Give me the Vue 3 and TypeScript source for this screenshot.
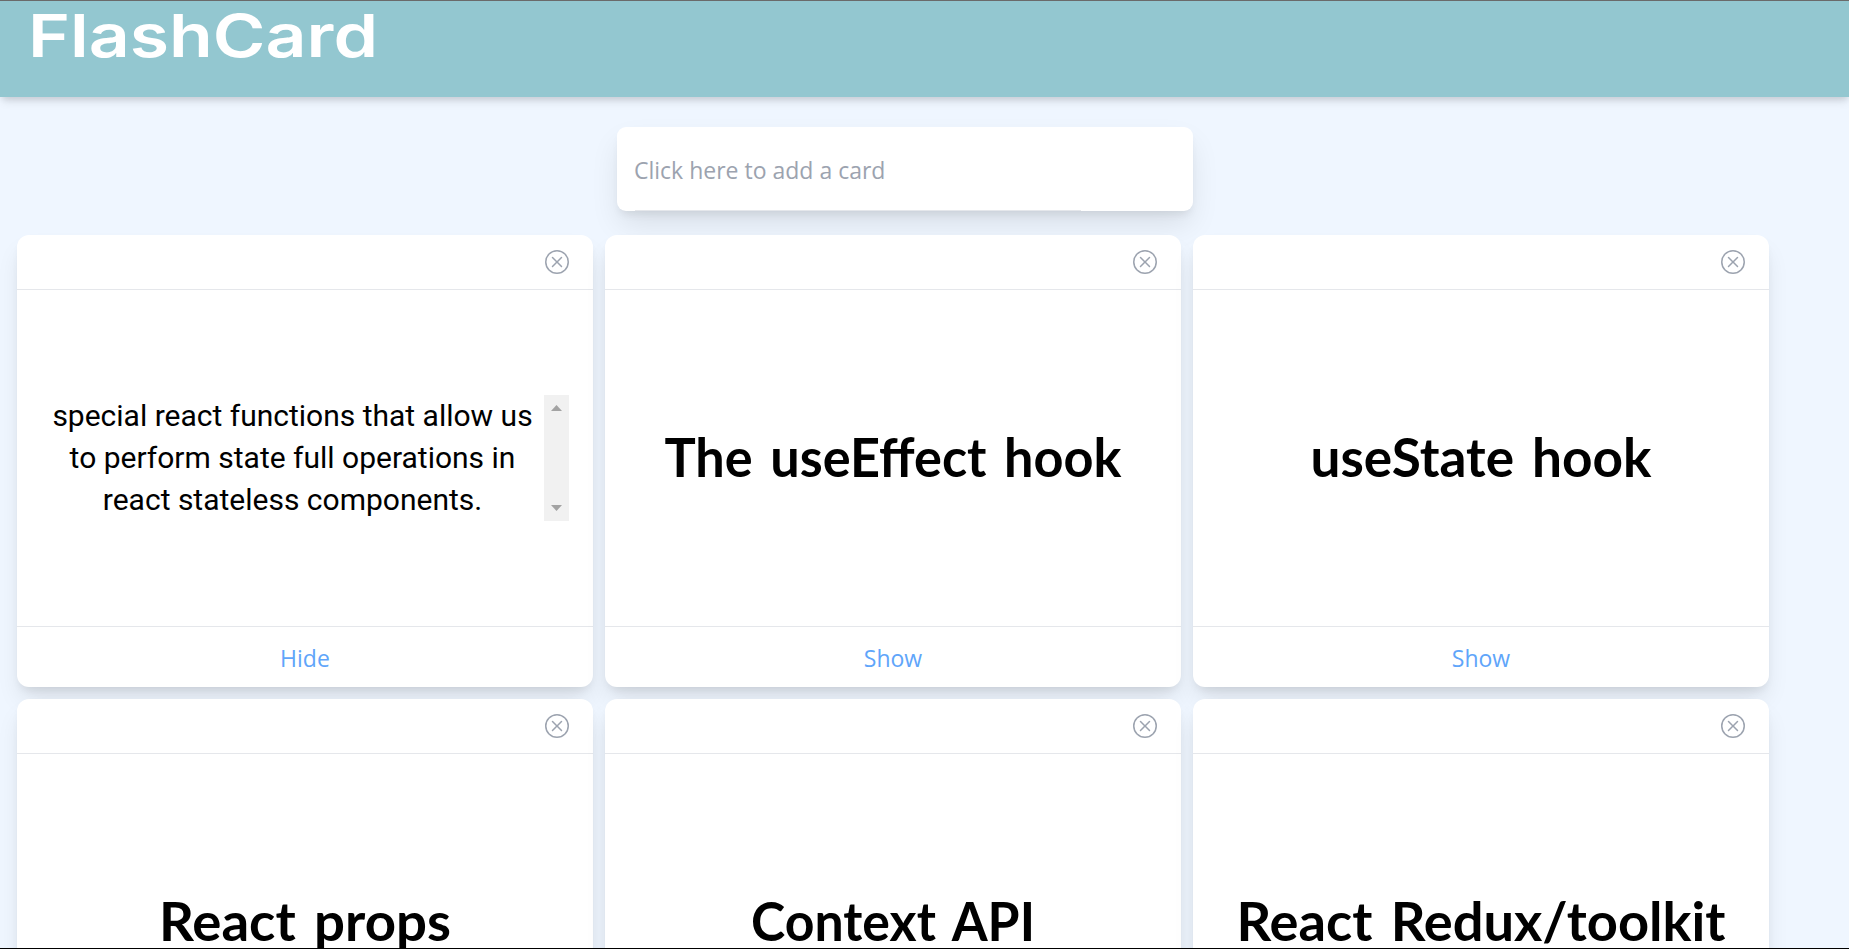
<script setup lang="ts">
interface Card {
  id: number
  title: string
  titleWidth: number
  answer?: string[]
}

const cards: Card[] = [
  {
    id: 1,
    title: 'React hooks',
    titleWidth: 300,
    answer: [
      'special react functions that allow us',
      'to perform state full operations in',
      'react stateless components.',
    ],
  },
  { id: 2, title: 'The useEffect hook', titleWidth: 457 },
  { id: 3, title: 'useState hook', titleWidth: 341 },
  { id: 4, title: 'React props', titleWidth: 292 },
  { id: 5, title: 'Context API', titleWidth: 284 },
  { id: 6, title: 'React Redux/toolkit', titleWidth: 489 },
]
</script>

<template>
  <div class="page">
    <header class="topbar">
      <svg class="brand" width="400" height="80" role="img" aria-label="FlashCard">
        <text x="28" y="56" textLength="350" lengthAdjust="spacingAndGlyphs">FlashCard</text>
      </svg>
    </header>

    <form class="add-card" @submit.prevent>
      <div class="add-field">Click here to add a card</div>
    </form>

    <main class="grid">
      <article v-for="card in cards" :key="card.id" class="card">
        <div class="card-head">
          <svg class="close" viewBox="0 0 16 16" width="24" height="24" fill="currentColor">
            <path d="M8 15A7 7 0 1 1 8 1a7 7 0 0 1 0 14m0 1A8 8 0 1 0 8 0a8 8 0 0 0 0 16" />
            <path d="M4.646 4.646a.5.5 0 0 1 .708 0L8 7.293l2.646-2.647a.5.5 0 0 1 .708.708L8.707 8l2.647 2.646a.5.5 0 0 1-.708.708L8 8.707l-2.646 2.647a.5.5 0 0 1-.708-.708L7.293 8 4.646 5.354a.5.5 0 0 1 0-.708" />
          </svg>
        </div>

        <div class="card-body">
          <div v-if="card.answer" class="answer">
            <p class="answer-text">
              <span v-for="line in card.answer" :key="line">{{ line }}</span>
            </p>
            <div class="scrollbar">
              <svg width="11" height="6" viewBox="0 0 11 6"><path d="M0 6 5.5 0 11 6z" /></svg>
              <svg width="11" height="6" viewBox="0 0 11 6"><path d="M0 0h11L5.5 6z" /></svg>
            </div>
          </div>
          <svg v-else class="title" width="540" height="80">
            <text
              :x="270 - card.titleWidth / 2"
              y="59"
              :textLength="card.titleWidth"
              lengthAdjust="spacingAndGlyphs"
            >{{ card.title }}</text>
          </svg>
        </div>

        <div class="card-foot">
          <button type="button" class="toggle">{{ card.answer ? 'Hide' : 'Show' }}</button>
        </div>
      </article>
    </main>
  </div>
</template>

<style>
html,
body {
  margin: 0;
  overflow: hidden;
}
</style>

<style scoped>
.page {
  box-sizing: border-box;
  width: 100vw;
  height: 100vh;
  overflow: hidden;
  background: #eff6ff;
  border-top: 1px solid #6a6a6a;
  border-bottom: 1px solid #000;
  font-family: 'Open Sans', 'Noto Sans', sans-serif;
}

.topbar {
  height: 96px;
  background: #93c7d0;
  box-shadow: 0 6px 9px -1.5px rgba(0, 0, 0, 0.1), 0 3px 6px -1.5px rgba(0, 0, 0, 0.09);
}

.brand {
  display: block;
}

.brand text {
  font: 600 59px Inter, 'DejaVu Sans', sans-serif;
  fill: #fff;
}

.add-card {
  box-sizing: border-box;
  width: 576px;
  height: 84px;
  margin: 30px 0 24px 617px;
  padding-left: 18px;
  background: #fff;
  border-radius: 9px;
  box-shadow: 0 15px 30px -3px rgba(0, 0, 0, 0.1), 0 6px 9px -3px rgba(0, 0, 0, 0.08);
}

.add-field {
  box-sizing: border-box;
  width: 446px;
  height: 84px;
  padding-top: 2px;
  border-bottom: 1px solid #e5e7eb;
  color: #9ca3af;
  font-size: 23px;
  line-height: 83px;
  text-indent: -1px;
  white-space: nowrap;
}

.grid {
  display: grid;
  grid-template-columns: repeat(3, 576px);
  gap: 12px;
  padding-left: 17px;
}

.card {
  display: flex;
  flex-direction: column;
  height: 452px;
  background: #fff;
  border-radius: 12px;
  box-shadow: 0 15px 24px -4px rgba(0, 0, 0, 0.1), 0 6px 9px -3px rgba(0, 0, 0, 0.08);
}

.card-head {
  box-sizing: border-box;
  display: flex;
  justify-content: flex-end;
  height: 55px;
  padding: 15px 24px 0;
  border-bottom: 1px solid #e5e7eb;
}

.close {
  color: #9ca3af;
}

.card-body {
  display: flex;
  flex: 1;
  align-items: center;
  justify-content: center;
  min-height: 0;
}

.title text {
  font: 700 53px Lato, sans-serif;
  word-spacing: 5px;
  fill: #000;
}

.answer {
  display: flex;
  box-sizing: border-box;
  width: 100%;
  height: 126px;
  padding: 0 24px;
}

.answer-text {
  display: flex;
  flex: 1;
  flex-direction: column;
  align-items: center;
  margin: 0;
  color: #000;
  font: 400 30px/42px Roboto, sans-serif;
  white-space: nowrap;
}

.scrollbar {
  box-sizing: border-box;
  display: flex;
  flex-direction: column;
  align-items: center;
  justify-content: space-between;
  width: 25px;
  padding: 10px 0;
  background: #f1f1f1;
  fill: #a3a3a3;
}

.card-foot {
  box-sizing: border-box;
  display: flex;
  align-items: center;
  justify-content: center;
  height: 61px;
  padding-top: 1px;
  border-top: 1px solid #e5e7eb;
}

.toggle {
  padding: 0;
  border: 0;
  background: none;
  color: #60a5fa;
  font: 400 23px/32px 'Open Sans', 'Noto Sans', sans-serif;
}
</style>
